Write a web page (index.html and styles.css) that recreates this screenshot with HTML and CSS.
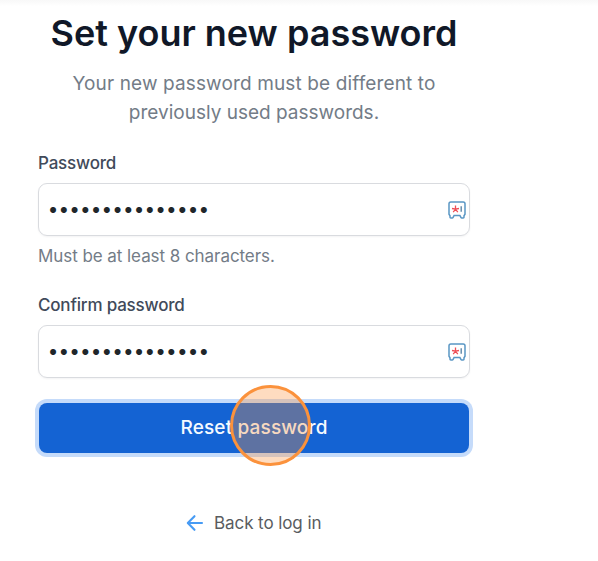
FILE: index.html
```html
<!DOCTYPE html>
<html lang="en">
<head>
<meta charset="utf-8">
<title>Set your new password</title>
<link rel="stylesheet" href="styles.css">
</head>
<body>
<main class="panel">
  <h1 class="title"><span>Set your new password</span></h1>
  <p class="intro"><span class="intro-start">Your new password must be different to</span><br><span>previously used passwords.</span></p>
  <form class="form">
    <label class="label" for="password"><span>Password</span></label>
    <div class="field">
      <input class="input" id="password" type="password" value="abcdefghijklmno">
      <svg class="manager" viewBox="0 0 18 18"><path class="frame" d="M2.8 1h12.4q1.8 0 1.8 1.8v10.4l-1 1.6v1.5q0 .7-.8.7h-1.4q-.6 0-.9-.6l-1-1.9H6.1l-1 1.9q-.3.6-.9.6H2.8q-.8 0-.8-.7v-1.5l-1-1.6V2.8Q1 1 2.8 1z"/><path class="star" d="M7.5 4.6v3.6M4 7.5l3.5.7 3.5-.7M5.2 11.2l2.3-3 2.3 3"/><path class="bar" d="M13.2 5.2v5.6"/></svg>
    </div>
    <p class="hint">Must be at least 8 characters.</p>
    <label class="label label-confirm" for="confirm"><span>Confirm password</span></label>
    <div class="field">
      <input class="input" id="confirm" type="password" value="abcdefghijklmno">
      <svg class="manager" viewBox="0 0 18 18"><path class="frame" d="M2.8 1h12.4q1.8 0 1.8 1.8v10.4l-1 1.6v1.5q0 .7-.8.7h-1.4q-.6 0-.9-.6l-1-1.9H6.1l-1 1.9q-.3.6-.9.6H2.8q-.8 0-.8-.7v-1.5l-1-1.6V2.8Q1 1 2.8 1z"/><path class="star" d="M7.5 4.6v3.6M4 7.5l3.5.7 3.5-.7M5.2 11.2l2.3-3 2.3 3"/><path class="bar" d="M13.2 5.2v5.6"/></svg>
    </div>
    <button class="submit" type="button"><span>Reset password</span><i class="click-marker"></i></button>
  </form>
  <a class="back"><svg class="arrow" viewBox="0 0 18 18"><path d="M16 9H2M8.5 2.2L1.8 9l6.7 6.8"/></svg><span>Back to log in</span></a>
</main>
</body>
</html>
```

FILE: styles.css
```css
* { box-sizing: border-box; }
body {
  margin: 0;
  height: 561px;
  overflow: hidden;
  background: linear-gradient(#f8f8f8, #fbfbfb 3px, #fff 6px);
  font-family: Inter, "Liberation Sans", sans-serif;
}
.panel {
  width: 432px;
  margin-left: 38px;
  padding-top: 11px;
  display: flex;
  flex-direction: column;
}
.title {
  margin: 0;
  font-size: 36px;
  line-height: 44px;
  font-weight: 600;
  text-align: center;
  color: #101828;
  white-space: nowrap;
}
.intro {
  margin: 14px 0 0;
  font-size: 19px;
  line-height: 29px;
  text-align: center;
  color: #737c87;
}
.intro-start { letter-spacing: .13px; }
.form { display: flex; flex-direction: column; }
.label {
  margin-top: 25px;
  font-size: 17px;
  line-height: 22px;
  font-weight: 500;
  letter-spacing: -.19px;
  color: #414a5a;
}
.label-confirm { margin-top: 27px; }
.field {
  height: 53px;
  margin-top: 9px;
  padding: 0 3px 0 9px;
  display: flex;
  align-items: center;
  border: 1px solid #d9dbdf;
  border-radius: 9px;
  box-shadow: 0 1px 2px rgba(16, 24, 40, .05);
}
.input {
  flex: 1;
  min-width: 0;
  padding: 0;
  border: 0;
  outline: 0;
  background: none;
  font: 500 19px/24px Inter, sans-serif;
  letter-spacing: .63px;
  color: #20262a;
}
.manager { width: 18px; height: 18px; fill: none; }
.frame { stroke: #5996c4; stroke-width: 1.5; }
.star { stroke: #ee4d55; stroke-width: 1.3; }
.bar { stroke: #5f87a8; stroke-width: 1.4; }
.hint {
  margin: 9px 0 0;
  font-size: 17px;
  line-height: 22px;
  letter-spacing: -.06px;
  color: #737c87;
}
.submit {
  position: relative;
  height: 50px;
  margin: 25px 1px 0;
  padding: 0;
  border: 0;
  border-radius: 8px;
  background: #1463d3;
  box-shadow: 0 0 0 4px #c5dbfa;
  font: 500 19px/28px Inter, sans-serif;
  letter-spacing: .15px;
  color: #f5faff;
}
.click-marker {
  position: absolute;
  left: 190.5px;
  top: -18px;
  width: 81px;
  height: 81px;
  border: 3px solid #fb923c;
  border-radius: 50%;
  background: rgba(251, 146, 60, .32);
}
.back {
  margin: 58px 0 0 148px;
  display: flex;
  align-items: center;
  font-size: 17px;
  line-height: 24px;
  letter-spacing: -.08px;
  color: #595c60;
}
.arrow {
  width: 18px;
  height: 18px;
  margin-right: 10px;
  fill: none;
  stroke: #479bf4;
  stroke-width: 2.1;
  stroke-linecap: round;
  stroke-linejoin: round;
}
```
